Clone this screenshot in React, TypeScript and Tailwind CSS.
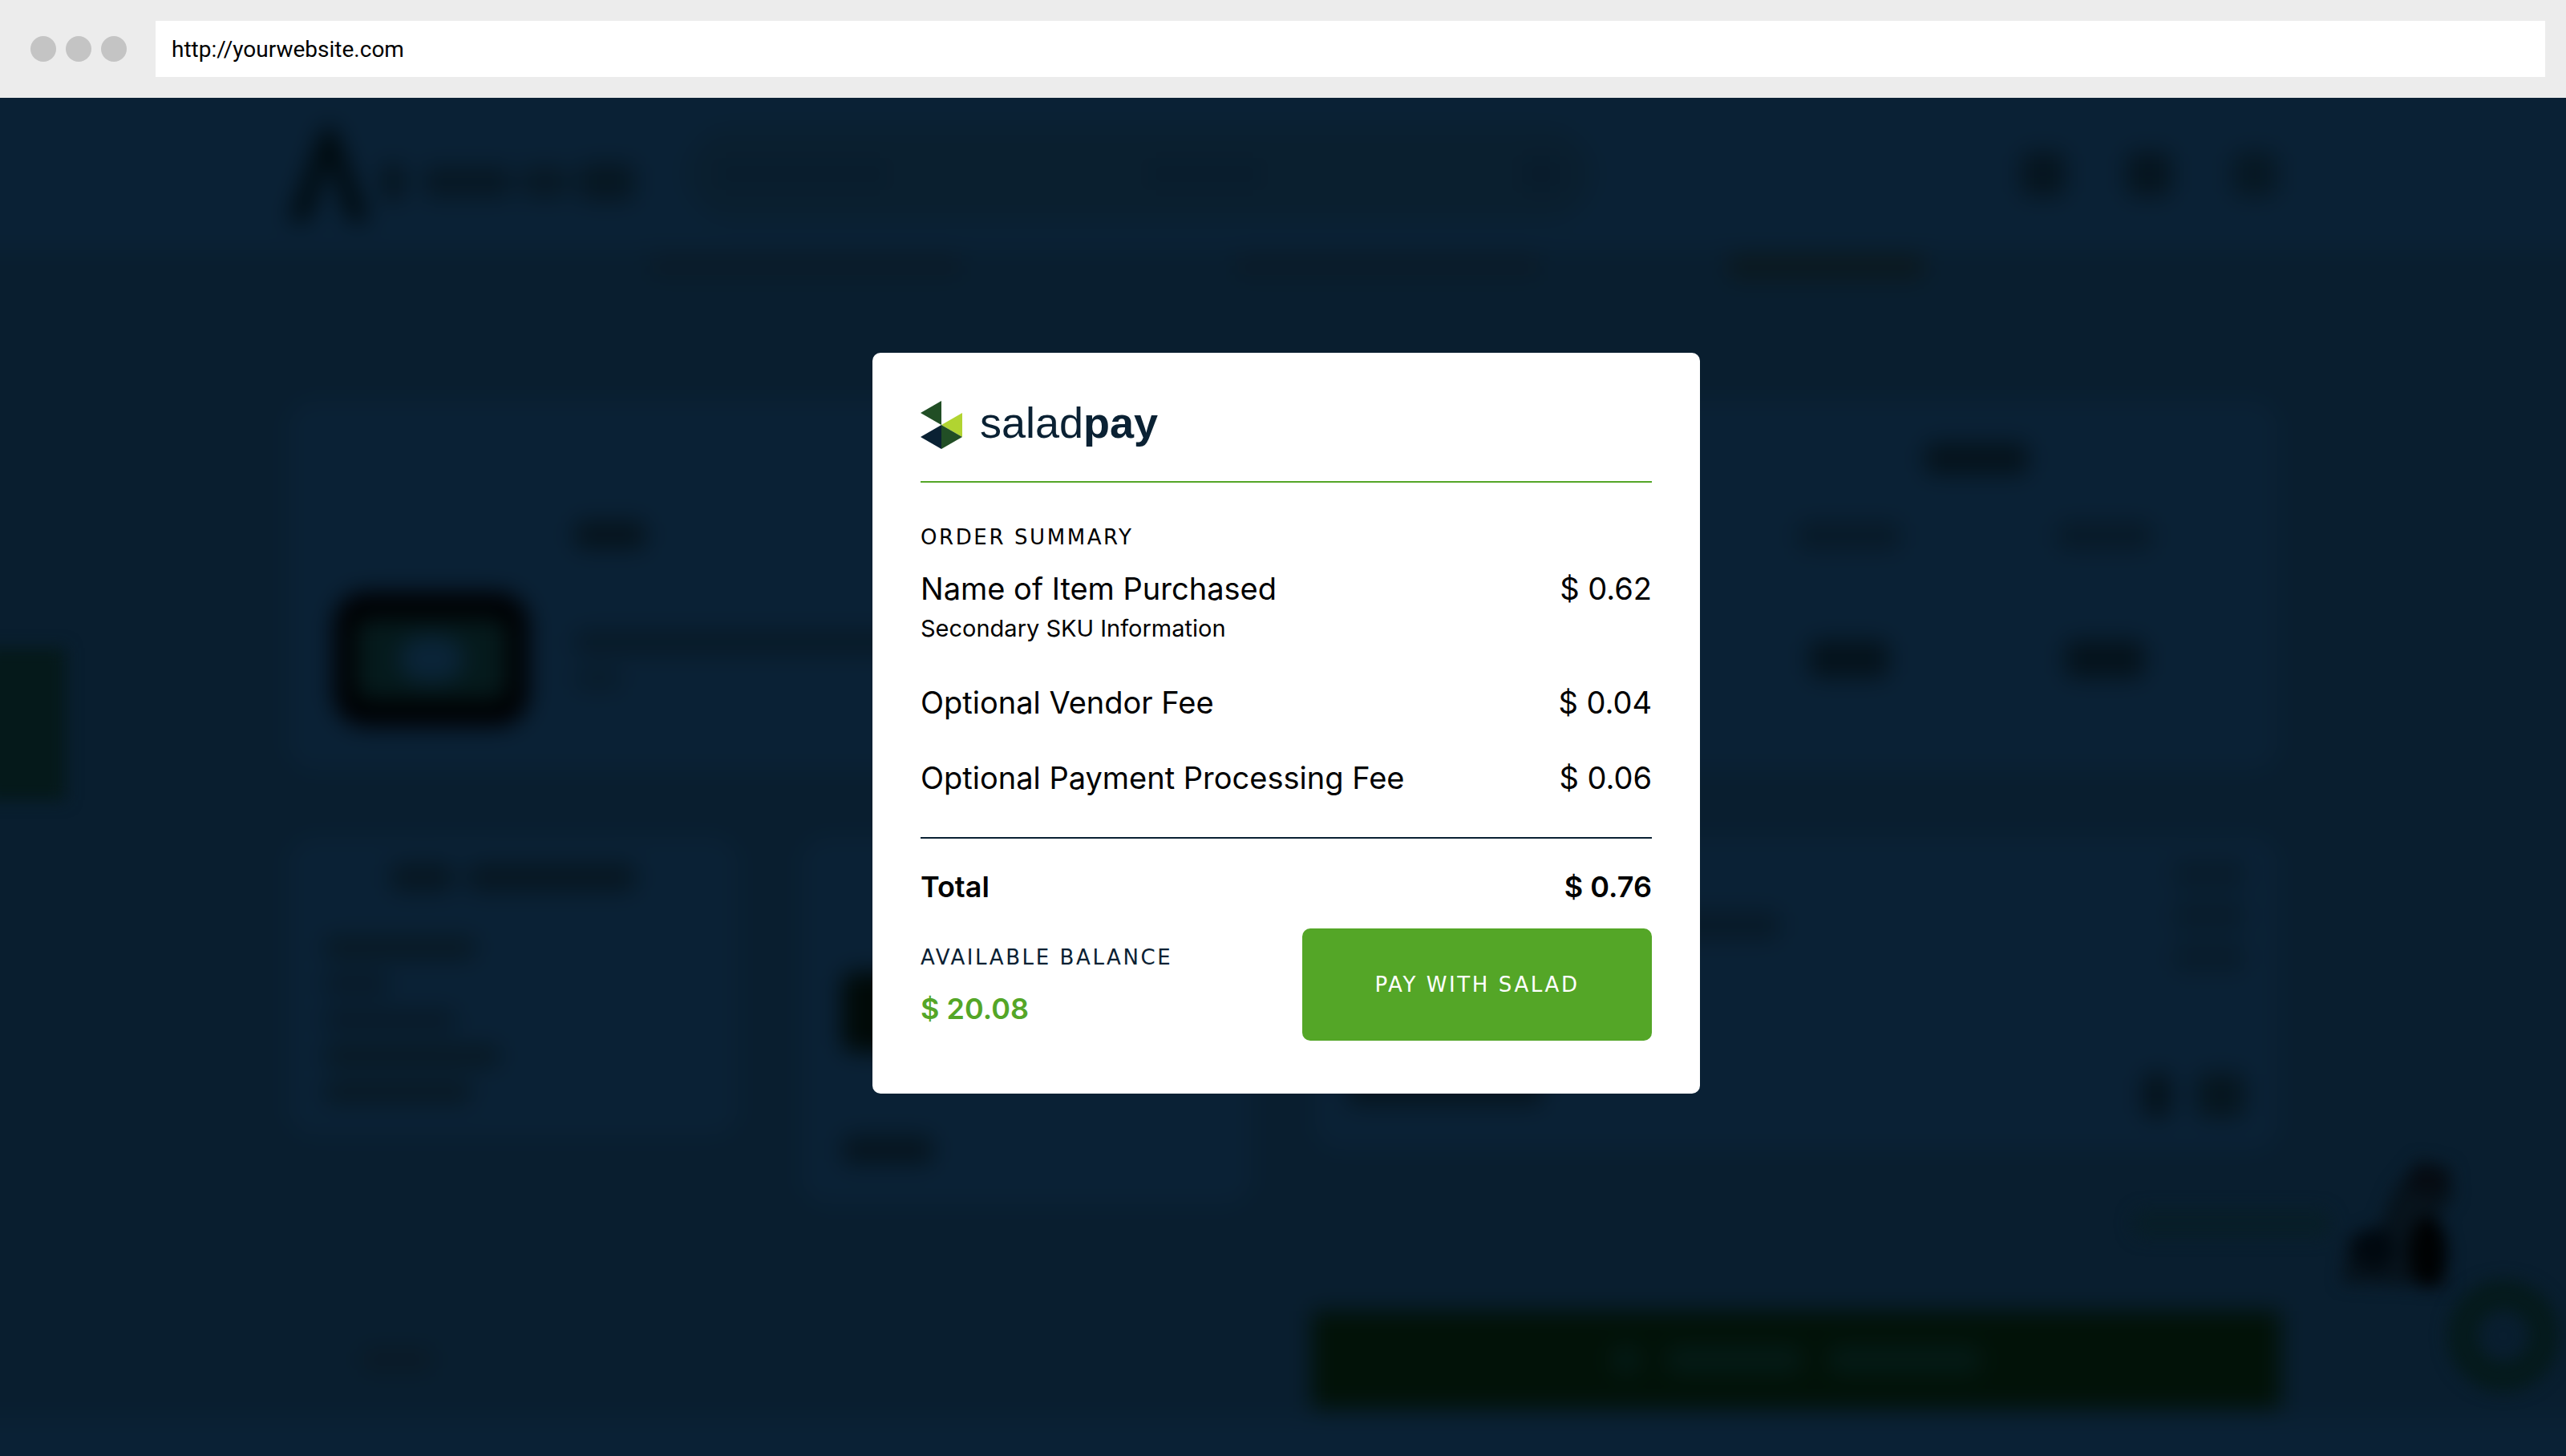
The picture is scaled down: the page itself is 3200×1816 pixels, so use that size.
import React from "react";

/* Soft placeholder bar used for the store page behind the dialog. */
function Bar({ className }: { className: string }) {
  return <div className={`rounded-xl ${className}`} />;
}

function StoreHeader() {
  return (
    <div className="h-[222px] shrink-0 bg-[#0a2135] pt-8">
      <div className="mx-auto flex h-full w-full max-w-[2480px] items-center">
        <svg viewBox="0 0 100 130" className="h-[130px] w-[100px]">
          <path d="M0 124 L34 30 Q50 -20 66 30 L100 124 H76 L50 46 L24 124 Z" className="fill-[#000a0e]" />
        </svg>
        <Bar className="mt-5 ml-4 h-12 w-7 bg-[#06151f]" />
        <Bar className="mt-5 ml-6 h-10 w-[110px] bg-[#071824]" />
        <Bar className="mt-5 ml-3 h-10 w-[60px] bg-[#081925]" />
        <Bar className="mt-5 ml-3 h-12 w-[70px] bg-[#071722]" />
        <div className="ml-16 flex h-[116px] w-[1130px] items-center justify-between rounded-full bg-[#0a1f2f] px-10">
          <Bar className="h-10 w-[210px] bg-[#091d2d]" />
          <Bar className="h-10 w-[140px] bg-[#091d2d]" />
          <Bar className="h-12 w-12 bg-[#091c2c]" />
        </div>
        <div className="ml-auto flex items-center gap-[76px]">
          <Bar className="size-14 bg-[#06151f]" />
          <Bar className="size-14 bg-[#06151f]" />
          <Bar className="size-14 bg-[#071823]" />
        </div>
      </div>
    </div>
  );
}

function CartCard() {
  return (
    <div className="flex h-[460px] shrink-0 rounded-[32px] bg-[#0a2135] px-14 py-[52px]">
      <div className="w-[300px] pt-[186px]">
        <div className="flex h-[168px] w-[244px] items-center rounded-[40px] bg-[#000103] px-7">
          <div className="flex h-[100px] w-full items-center justify-center rounded-2xl bg-[#051a1c]">
            <div className="h-14 w-20 rounded-full bg-[#0a2438]" />
          </div>
        </div>
      </div>
      <div className="flex flex-1 flex-col items-start pt-[97px]">
        <Bar className="h-9 w-[90px] bg-[#06141d]" />
        <Bar className="mt-[100px] h-8 w-[440px] bg-[#081a28]" />
        <Bar className="mt-4 h-7 w-[60px] bg-[#091c2b]" />
      </div>
      <div className="grid w-[638px] grid-cols-2 content-start justify-items-center">
        <Bar className="col-span-2 h-10 w-[130px] bg-[#05131c]" />
        <Bar className="mt-[58px] h-9 w-[130px] bg-[#081a28]" />
        <Bar className="mt-[58px] h-9 w-[120px] bg-[#081a28]" />
        <Bar className="mt-[112px] h-12 w-[100px] bg-[#05131c]" />
        <Bar className="mt-[112px] h-12 w-[100px] bg-[#05131c]" />
      </div>
    </div>
  );
}

function DetailCards() {
  return (
    <div className="mt-[84px] grid h-[460px] shrink-0 grid-cols-[560px_560px_1fr] items-start gap-20">
      <div className="flex h-[372px] flex-col rounded-[32px] bg-[#0a2135] px-11 pt-8">
        <div className="flex justify-center gap-4">
          <Bar className="h-9 w-[80px] bg-[#071722]" />
          <Bar className="h-9 w-[210px] bg-[#071722]" />
        </div>
        <div className="mt-[56px] flex flex-col gap-[17px]">
          <Bar className="h-7 w-[190px] bg-[#081924]" />
          <Bar className="h-7 w-[80px] bg-[#081a28]" />
          <Bar className="h-7 w-[165px] bg-[#081a28]" />
          <Bar className="h-7 w-[220px] bg-[#081924]" />
          <Bar className="h-7 w-[185px] bg-[#081924]" />
        </div>
      </div>
      <div className="flex h-[458px] flex-col rounded-[32px] bg-[#0a2135] px-[50px] pt-[168px]">
        <div className="h-[100px] w-[160px] rounded-2xl bg-[#010a08]" />
        <Bar className="mt-[104px] h-9 w-[114px] bg-[#06151f]" />
      </div>
      <div className="flex h-[390px] justify-between rounded-[32px] bg-[#0a2135] px-10 pt-7 pb-10">
        <div className="flex flex-col justify-between pt-16 pb-4">
          <Bar className="ml-[400px] h-9 w-[140px] bg-[#081a28]" />
          <Bar className="h-9 w-[245px] bg-[#06151f]" />
        </div>
        <div className="flex flex-col items-end gap-4">
          <Bar className="h-9 w-[90px] bg-[#091c2b]" />
          <Bar className="h-9 w-[90px] bg-[#091c2b]" />
          <Bar className="h-9 w-[90px] bg-[#091c2b]" />
          <div className="mt-auto flex gap-8">
            <Bar className="h-14 w-9 bg-[#05131c]" />
            <Bar className="h-14 w-15 bg-[#06161f]" />
          </div>
        </div>
      </div>
    </div>
  );
}

function StorePage() {
  return (
    <div aria-hidden="true" className="relative flex flex-1 flex-col overflow-hidden bg-[#091e2f]">
      {/* Bleeds past the clipped edges so the blur stays even at the borders. */}
      <div className="-m-8 flex flex-1 flex-col blur-[14px]">
        <StoreHeader />
        <div className="flex flex-1 flex-col bg-[#091e2f]">
          <div className="mx-auto flex w-full max-w-[2480px] flex-1 flex-col">
            <div className="flex h-[188px] shrink-0 pt-1">
              <Bar className="ml-[450px] h-7 w-[390px] bg-[#0a1b28]" />
              <Bar className="ml-[340px] h-7 w-[380px] bg-[#0a1b28]" />
              <Bar className="ml-[235px] h-8 w-[245px] bg-[#0b191f]" />
            </div>
            <CartCard />
            <DetailCards />
            <div className="-mr-1 mt-[131px] flex items-center justify-between">
              <Bar className="ml-[90px] h-7 w-[90px] bg-[#0a1a26]" />
              <div className="flex h-[122px] w-[1208px] items-center justify-center gap-8 bg-[#021208]">
                <Bar className="h-9 w-9 bg-[#041a16]" />
                <Bar className="h-9 w-[170px] bg-[#041a16]" />
                <Bar className="h-9 w-[190px] bg-[#041a16]" />
              </div>
            </div>
          </div>
        </div>
        <div className="h-20 shrink-0 bg-[#0a2135]" />
      </div>
      {/* Floating store widgets: feedback tab, helper figure and chat bubble. */}
      <div className="absolute top-[686px] -left-5 h-[190px] w-[102px] bg-[#05191a] blur-[10px]" />
      <div className="absolute right-[134px] bottom-[204px] flex items-end blur-[10px]">
        <div className="mr-2 mb-[68px] h-[36px] w-[250px] rounded-full bg-[#081e28]" />
        <svg viewBox="0 0 150 170" className="h-[170px] w-[150px]">
          <path d="M70 40 L100 4 L140 14 L144 50 L124 76 L138 164 L4 158 L12 100 L50 90 Z" className="fill-[#07131c]" />
          <ellipse cx="112" cy="30" rx="24" ry="20" className="fill-[#060c13]" />
          <ellipse cx="112" cy="120" rx="24" ry="44" className="fill-[#000203]" />
          <ellipse cx="44" cy="116" rx="26" ry="26" className="fill-[#010910]" />
        </svg>
      </div>
      <div className="absolute right-2 bottom-[80px] size-[140px] rounded-full border-[38px] border-[#051a1c] blur-[10px]" />
    </div>
  );
}

function SaladMark() {
  return (
    <svg viewBox="0 0 52 60" className="h-[60px] w-[52px]" aria-hidden="true">
      <path d="M26 0 V30 L0 15 Z" fill="#214e25" />
      <path d="M52 15 V45 L26 30 Z" fill="#b1d431" />
      <path d="M26 30 V60 L0 45 Z" fill="#0a2133" />
      <path d="M26 30 L52 45 L26 60 Z" fill="#214e25" />
    </svg>
  );
}

function LineItem({ label, note, amount }: { label: string; note?: string; amount: string }) {
  return (
    <div className="flex items-start justify-between leading-[48px]">
      <dt>
        {label}
        {note && <small className="block text-[29px] leading-[52px]">{note}</small>}
      </dt>
      <dd>{amount}</dd>
    </div>
  );
}

function PaymentDialog() {
  return (
    <section
      role="dialog"
      aria-label="saladpay"
      className="w-[1032px] rounded-[10px] bg-white px-15 pt-15 pb-[66px] text-[38px] text-black"
    >
      <header className="flex h-[102px] items-start gap-[22px] border-b-2 border-[#54a627]">
        <SaladMark />
        <span className="font-['Liberation_Sans',sans-serif] text-[54px] leading-[54px] text-[#0a2133]">
          salad<b>pay</b>
        </span>
      </header>

      <h2 className="mt-[52px] font-['DejaVu_Sans',sans-serif] text-[26px] leading-8 tracking-widest">ORDER SUMMARY</h2>
      <dl className="mt-6">
        <LineItem label="Name of Item Purchased" note="Secondary SKU Information" amount="$ 0.62" />
        <div className="mt-[42px] flex flex-col gap-[46px]">
          <LineItem label="Optional Vendor Fee" amount="$ 0.04" />
          <LineItem label="Optional Payment Processing Fee" amount="$ 0.06" />
        </div>
        <div className="mt-[50px] border-t-2 border-[#0a2133] pt-9 text-[36px] font-semibold">
          <LineItem label="Total" amount="$ 0.76" />
        </div>
      </dl>

      <footer className="mt-7 flex items-start justify-between">
        <div className="pt-5">
          <p className="font-['DejaVu_Sans',sans-serif] text-[26px] leading-8 tracking-widest text-[#0a2133]">
            AVAILABLE BALANCE
          </p>
          <p className="mt-6 text-[36px] leading-[48px] font-semibold text-[#54a627]">$ 20.08</p>
        </div>
        <button
          type="button"
          className="h-[140px] w-[436px] rounded-[10px] bg-[#54a627] font-['DejaVu_Sans',sans-serif] text-[26px] tracking-widest text-white"
        >
          PAY WITH SALAD
        </button>
      </footer>
    </section>
  );
}

export default function App() {
  return (
    <div className="flex min-h-screen flex-col font-['Inter',sans-serif]">
      <div className="flex h-[122px] shrink-0 items-center bg-[#ececec] pr-[26px] pl-[38px]">
        <div className="flex gap-3">
          <span className="size-8 rounded-full bg-[#c4c4c4]" />
          <span className="size-8 rounded-full bg-[#c4c4c4]" />
          <span className="size-8 rounded-full bg-[#c4c4c4]" />
        </div>
        <input
          type="text"
          aria-label="Address"
          defaultValue="http://yourwebsite.com"
          className="ml-9 h-[70px] flex-1 bg-white px-5 font-['Roboto',sans-serif] text-[28px] text-black outline-none"
        />
      </div>
      <main className="relative flex flex-1 flex-col">
        <StorePage />
        <div className="absolute inset-0 flex items-start justify-center pt-[318px] pl-2">
          <PaymentDialog />
        </div>
      </main>
    </div>
  );
}
